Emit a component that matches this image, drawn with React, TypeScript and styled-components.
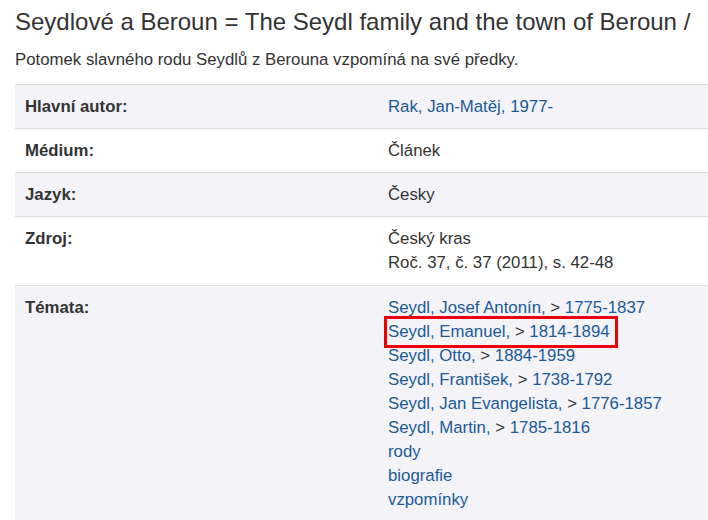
import React from "react"
import styled, { createGlobalStyle } from "styled-components"

const GlobalStyle = createGlobalStyle`
  html, body {
    margin: 0;
    padding: 0;
    background: #fff;
  }
  body {
    font-family: "Liberation Sans", Arial, sans-serif;
    color: #333;
    overflow: hidden;
  }
`

const Page = styled.div`
  padding: 0 0 0 15px;
  width: 708px;
  box-sizing: border-box;
`

const Title = styled.h1`
  margin: 0;
  padding-top: 8px;
  font-size: 24px;
  font-weight: 400;
  line-height: 28px;
  color: #333;
`

const Subtitle = styled.p`
  margin: 12px 0 12px;
  font-size: 16.8px;
  line-height: 24px;
`

const Table = styled.div`
  border-bottom: 1px solid #ddd;
`

const Row = styled.div<{ $shaded?: boolean }>`
  display: grid;
  grid-template-columns: 363px 1fr;
  border-top: 1px solid #ddd;
  background: ${(p) => (p.$shaded ? "#f3f3f8" : "#fff")};
`

const Label = styled.div`
  padding: 9.5px 10px;
  font-size: 16.8px;
  line-height: 24px;
  font-weight: 700;
`

const Value = styled.div<{ $tall?: boolean }>`
  padding: 9.5px 10px ${(p) => (p.$tall ? "10.5px" : "9.5px")};
  font-size: 16.8px;
  line-height: 24px;
  display: flex;
  flex-direction: column;
`

const Link = styled.a<{ $marked?: boolean }>`
  color: #1b5a96;
  text-decoration: none;
  align-self: flex-start;
  ${(p) =>
    p.$marked &&
    `
    padding-right: 4px;
    outline: 3px solid #ee0000;
    outline-offset: 1px;
  `}
`

const Arrow = styled.span`
  color: #333;
`

const subjects: { name: string; years?: string }[] = [
  { name: "Seydl, Josef Antonín,", years: "1775-1837" },
  { name: "Seydl, Emanuel,", years: "1814-1894" },
  { name: "Seydl, Otto,", years: "1884-1959" },
  { name: "Seydl, František,", years: "1738-1792" },
  { name: "Seydl, Jan Evangelista,", years: "1776-1857" },
  { name: "Seydl, Martin,", years: "1785-1816" },
  { name: "rody" },
  { name: "biografie" },
  { name: "vzpomínky" },
]

export default function App() {
  return (
    <>
      <GlobalStyle />
      <Page>
        <Title>Seydlové a Beroun = The Seydl family and the town of Beroun /</Title>
        <Subtitle>Potomek slavného rodu Seydlů z Berouna vzpomíná na své předky.</Subtitle>
        <Table>
          <Row $shaded>
            <Label>Hlavní autor:</Label>
            <Value>
              <Link href="#">Rak, Jan-Matěj, 1977-</Link>
            </Value>
          </Row>
          <Row>
            <Label>Médium:</Label>
            <Value>Článek</Value>
          </Row>
          <Row $shaded>
            <Label>Jazyk:</Label>
            <Value>Česky</Value>
          </Row>
          <Row>
            <Label>Zdroj:</Label>
            <Value $tall>
              <span>Český kras</span>
              <span>Roč. 37, č. 37 (2011), s. 42-48</span>
            </Value>
          </Row>
          <Row $shaded>
            <Label>Témata:</Label>
            <Value>
              {subjects.map((s, i) => (
                <Link key={s.name} href="#" $marked={i === 1}>
                  {s.name}
                  {s.years && (
                    <>
                      {" "}
                      <Arrow>&gt;</Arrow> {s.years}
                    </>
                  )}
                </Link>
              ))}
            </Value>
          </Row>
        </Table>
      </Page>
    </>
  )
}
